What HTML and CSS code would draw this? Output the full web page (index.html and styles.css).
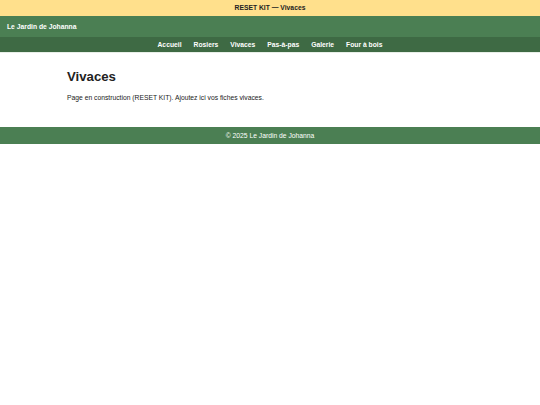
FILE: index.html
```html
<!DOCTYPE html>
<html lang="fr">
<head>
<meta charset="utf-8">
<title>Vivaces</title>
<link rel="stylesheet" href="styles.css">
</head>
<body>
<div class="banner">RESET KIT — Vivaces</div>
<header class="site-header">
  <div class="brand">Le Jardin de Johanna</div>
</header>
<nav class="site-nav">
  <a href="#">Accueil</a>
  <a href="#">Rosiers</a>
  <a href="#">Vivaces</a>
  <a href="#">Pas-à-pas</a>
  <a href="#">Galerie</a>
  <a href="#">Four à bois</a>
</nav>
<main class="content">
  <h1>Vivaces</h1>
  <p>Page en construction (RESET KIT). Ajoutez ici vos fiches vivaces.</p>
</main>
<footer class="site-footer">© 2025 Le Jardin de Johanna</footer>
</body>
</html>
```
FILE: styles.css
```css
* { box-sizing: border-box; }
html, body { margin: 0; padding: 0; background: #fff; }
body { font-family: "Liberation Sans", Arial, sans-serif; color: #222; }
.banner {
  background: #ffe08c;
  color: #222;
  font-weight: bold;
  font-size: 6.75px;
  text-align: center;
  height: 16px;
  line-height: 16px;
}
.site-header {
  background: #4b7f53;
  height: 21px;
  display: flex;
  align-items: center;
  padding: 0 7px;
}
.brand { color: #fff; font-weight: bold; font-size: 6.75px; }
.site-nav {
  background: #3e6a44;
  height: 16px;
  display: flex;
  justify-content: center;
  align-items: center;
  gap: 12px;
  border-bottom: 1px solid #e8efe8;
}
.site-nav a { color: #fff; font-weight: bold; font-size: 6.75px; text-decoration: none; }
.content { max-width: 406px; margin: 0 auto; padding: 16px 0 25px; }
.content h1 { font-size: 13.2px; line-height: 16px; margin: 0 0 8px; color: #222; }
.content p { font-size: 6.75px; line-height: 9px; margin: 0; color: #222; }
.site-footer {
  background: #4b7f53;
  color: #fff;
  font-size: 6.75px;
  text-align: center;
  height: 17px;
  line-height: 17px;
}
```
